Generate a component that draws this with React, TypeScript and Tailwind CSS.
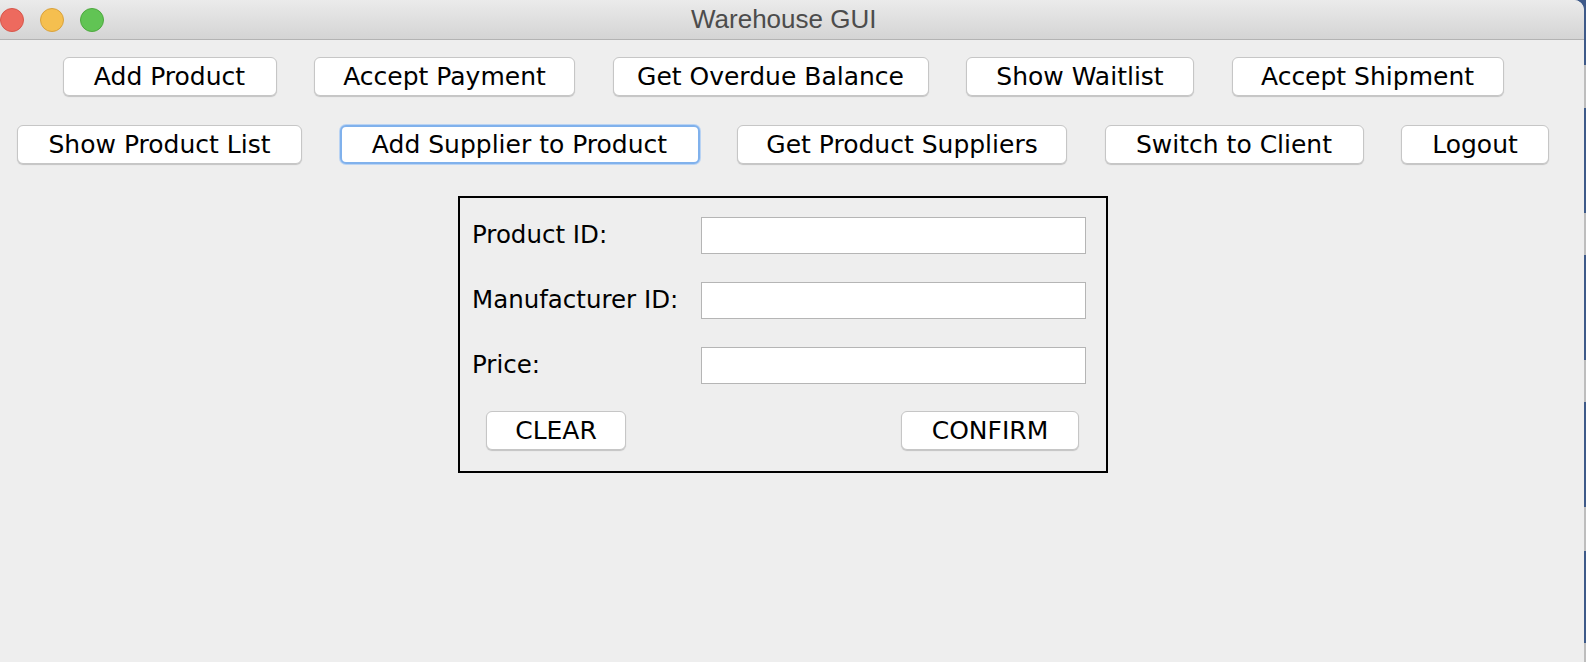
const topRow = [
  { label: 'Add Product', w: 'w-[214px]' },
  { label: 'Accept Payment', w: 'w-[261px]' },
  { label: 'Get Overdue Balance', w: 'w-[316px]' },
  { label: 'Show Waitlist', w: 'w-[228px]' },
  { label: 'Accept Shipment', w: 'w-[272px]' },
];

const bottomRow = [
  { label: 'Show Product List', w: 'w-[285px]' },
  { label: 'Add Supplier to Product', w: 'w-[360px]', focused: true },
  { label: 'Get Product Suppliers', w: 'w-[330px]' },
  { label: 'Switch to Client', w: 'w-[259px]' },
  { label: 'Logout', w: 'w-[148px]' },
];

const fields = ['Product ID:', 'Manufacturer ID:', 'Price:'];

const AquaButton = ({ label, w, focused }: { label: string; w: string; focused?: boolean }) => (
  <button
    type="button"
    className={`${w} h-[39px] shrink-0 rounded-[6px] bg-white text-[25px] leading-none text-black ${
      focused
        ? 'border-2 border-[#80b1ec] shadow-[0_0_0_1px_#b9d3f3]'
        : 'border border-[#c6c6c6] shadow-[0_1px_1px_rgba(0,0,0,0.18)]'
    }`}
  >
    {label}
  </button>
);

// strip of the desktop behind the window, right edge
const stripSegments = [
  { h: 'h-[65px]', c: 'bg-[#3e5a89]' },
  { h: 'h-[43px]', c: 'bg-[#bdbdbd]' },
  { h: 'h-[105px]', c: 'bg-[#3e5a89]' },
  { h: 'h-[42px]', c: 'bg-[#bdbdbd]' },
  { h: 'h-[105px]', c: 'bg-[#3e5a89]' },
  { h: 'h-[42px]', c: 'bg-[#bdbdbd]' },
  { h: 'h-[105px]', c: 'bg-[#3e5a89]' },
  { h: 'h-[44px]', c: 'bg-[#bdbdbd]' },
  { h: 'h-[92px]', c: 'bg-[#3e5a89]' },
  { h: 'h-[19px]', c: 'bg-[#bdbdbd]' },
];

export default function App() {
  return (
    <div
      className="flex w-[1586px] h-[662px] overflow-hidden bg-[#3e5a89]"
      style={{ fontFamily: '"DejaVu Sans", "Noto Sans", sans-serif' }}
    >
      <main className="w-[1584px] h-full flex flex-col bg-[#eeeeee] rounded-tr-[10px] overflow-hidden">
        {/* title bar */}
        <header className="relative h-[40px] shrink-0 flex items-center bg-gradient-to-b from-[#ebebeb] to-[#d4d4d4] border-b border-[#b3b3b3]">
          <div className="flex items-center gap-[16px]">
            <span className="w-[24px] h-[24px] rounded-full bg-[#ed6a5e] border border-[#d7574b]" />
            <span className="w-[24px] h-[24px] rounded-full bg-[#f5bf4f] border border-[#d9a23c]" />
            <span className="w-[24px] h-[24px] rounded-full bg-[#61c454] border border-[#4ea93f]" />
          </div>
          <span
            className="absolute left-[691px] top-[6px] text-[26px] leading-[27px] text-[#4c4c4c]"
            style={{ fontFamily: '"Liberation Sans", Arial, sans-serif' }}
          >
            Warehouse GUI
          </span>
        </header>

        <section className="flex flex-col items-center pr-[18px] pt-[17px]">
          <div className="flex gap-[37.5px]">
            {topRow.map((b) => (
              <AquaButton key={b.label} {...b} />
            ))}
          </div>
          <div className="flex gap-[37.5px] mt-[29px]">
            {bottomRow.map((b) => (
              <AquaButton key={b.label} {...b} />
            ))}
          </div>

          <form className="mt-[32px] w-[650px] h-[277px] border-2 border-black pl-[12px] pr-[20px] pt-[19px]">
            {fields.map((f, i) => (
              <article key={f} className={`flex items-center ${i > 0 ? 'mt-[28px]' : ''}`}>
                <span className="w-[229px] text-[24.5px] leading-none text-black">{f}</span>
                <input type="text" className="w-[386px] h-[37px] bg-white border border-[#b5b5b5] outline-none" />
              </article>
            ))}
            <article className="flex justify-between mt-[27px] pl-[14px] pr-[7px]">
              <AquaButton label="CLEAR" w="w-[140px]" />
              <AquaButton label="CONFIRM" w="w-[178px]" />
            </article>
          </form>
        </section>
      </main>

      <aside className="w-[2px] h-full flex flex-col">
        {stripSegments.map((s, i) => (
          <div key={i} className={`${s.h} ${s.c} shrink-0`} />
        ))}
      </aside>
    </div>
  );
}
